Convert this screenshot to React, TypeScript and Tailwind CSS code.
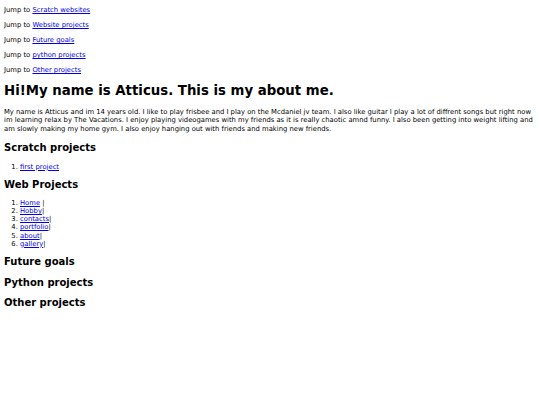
export default function App() {
  const jumps = ["Scratch websites", "Website projects", "Future goals", "python projects", "Other projects"];
  const web = [
    ["Home", " |"],
    ["Hobby", "|"],
    ["contacts", "|"],
    ["portfolio", "|"],
    ["about", "|"],
    ["gallery", "|"],
  ];
  const link = "text-[#0000ee] underline";
  return (
    <div
      className="bg-white min-h-[405px] px-[4px] flex flex-col items-start text-black text-[6.8px] leading-[8px]"
      style={{ fontFamily: '"DejaVu Sans", sans-serif' }}
    >
      {jumps.map((t, i) => (
        <p key={t} className={i === 0 ? "mt-[6px] h-[8px]" : "mt-[7px] h-[8px]"}>
          Jump to <a href="#" className={link}>{t}</a>
        </p>
      ))}
      <h1 className="mt-[9px] text-[13.3px] leading-[16px] font-bold">Hi!My name is Atticus. This is my about me.</h1>
      <p className="mt-[8.6px] leading-[8.7px] w-full">
        My name is Atticus and im 14 years old. I like to play frisbee and I play on the Mcdaniel jv team. I also like guitar I play a lot of diffrent songs but right now im learning relax by The Vacations. I enjoy playing videogames with my friends as it is really chaotic amnd funny. I also been getting into weight lifting and am slowly making my home gym. I also enjoy hanging out with friends and making new friends.
      </p>
      <h2 className="mt-[8px] text-[10px] leading-[12px] font-bold">Scratch projects</h2>
      <ol className="mt-[9px] list-decimal pl-[16px]">
        <li className="leading-[8px]"><a href="#" className={link}>first project</a></li>
      </ol>
      <h2 className="mt-[8px] text-[10px] leading-[12px] font-bold">Web Projects</h2>
      <ol className="mt-[8.5px] list-decimal pl-[16px]">
        {web.map(([t, s]) => (
          <li key={t} className="leading-[8.1px]"><a href="#" className={link}>{t}</a>{s}</li>
        ))}
      </ol>
      <h2 className="mt-[8.3px] text-[10px] leading-[12px] font-bold">Future goals</h2>
      <h2 className="mt-[8.7px] text-[10px] leading-[12px] font-bold">Python projects</h2>
      <h2 className="mt-[8.7px] text-[10px] leading-[12px] font-bold">Other projects</h2>
    </div>
  );
}
